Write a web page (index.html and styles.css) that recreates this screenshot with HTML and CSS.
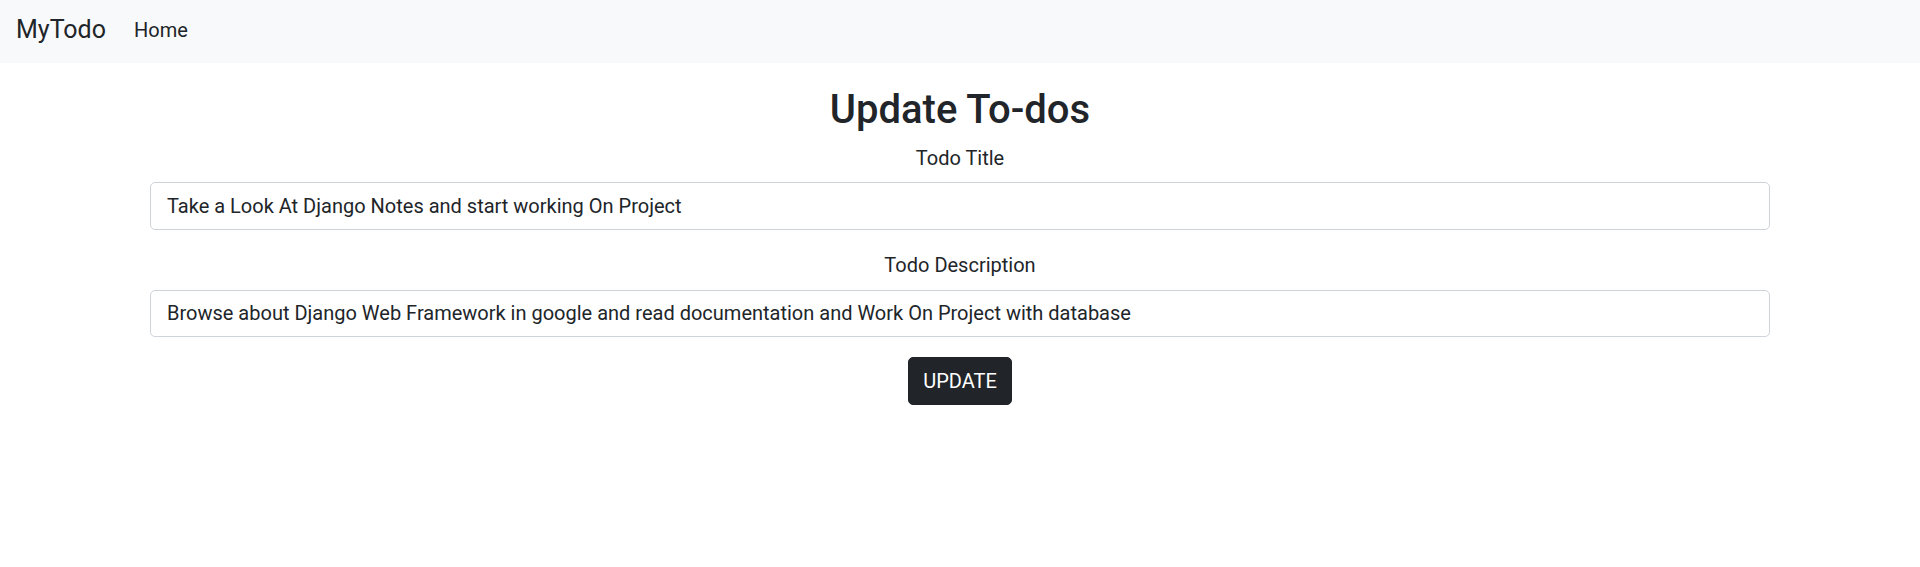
FILE: index.html
```html
<!DOCTYPE html>
<html lang="en">
<head>
<meta charset="utf-8">
<title>MyTodo</title>
<link rel="stylesheet" href="styles.css">
</head>
<body>
<nav class="navbar">
  <a class="brand" href="#">MyTodo</a>
  <a class="nav-link" href="#">Home</a>
</nav>
<main class="container">
  <h2 class="title">Update To-dos</h2>
  <form class="form">
    <div class="field field-first">
      <label class="label" for="title">Todo Title</label>
      <input class="control" id="title" type="text" value="Take a Look At Django Notes and start working On Project">
    </div>
    <div class="field">
      <label class="label" for="desc">Todo Description</label>
      <input class="control" id="desc" type="text" value="Browse about Django Web Framework in google and read documentation and Work On Project with database">
    </div>
    <div class="actions">
      <button class="btn" type="submit">UPDATE</button>
    </div>
  </form>
</main>
</body>
</html>
```
FILE: styles.css
```css
* { box-sizing: border-box; }
body {
  margin: 0;
  font-family: Roboto, "Noto Sans", sans-serif;
  font-size: 20px;
  color: #212529;
  background: #fff;
}
.navbar {
  height: 63px;
  background: #f8f9fa;
  display: flex;
  align-items: center;
  padding: 0 16px 4px;
  gap: 28px;
}
.brand { font-size: 25px; line-height: 30px; color: #212529; text-decoration: none; }
.nav-link { font-size: 20px; line-height: 30px; color: #212529; text-decoration: none; }
.container {
  max-width: 1650px;
  margin: 0 auto;
  padding: 23px 15px 0;
  text-align: center;
}
.title {
  margin: 0 0 9px;
  font-size: 40px;
  font-weight: 500;
  line-height: 48px;
}
.form { display: flex; flex-direction: column; }
.field { display: flex; flex-direction: column; margin-bottom: 20px; }
.label { display: block; line-height: 30px; margin-bottom: 10px; }
.field-first .label { margin-bottom: 9px; }
.control {
  display: block;
  width: 100%;
  height: 47.5px;
  padding: 0 16px;
  font: inherit;
  color: #212529;
  border: 1px solid #ced4da;
  border-radius: 5px;
  background: #fff;
}
.actions { display: flex; justify-content: center; }
.btn {
  width: 104px;
  height: 47.5px;
  font: inherit;
  color: #fff;
  background: #212529;
  border: 1px solid #212529;
  border-radius: 5px;
}
```
